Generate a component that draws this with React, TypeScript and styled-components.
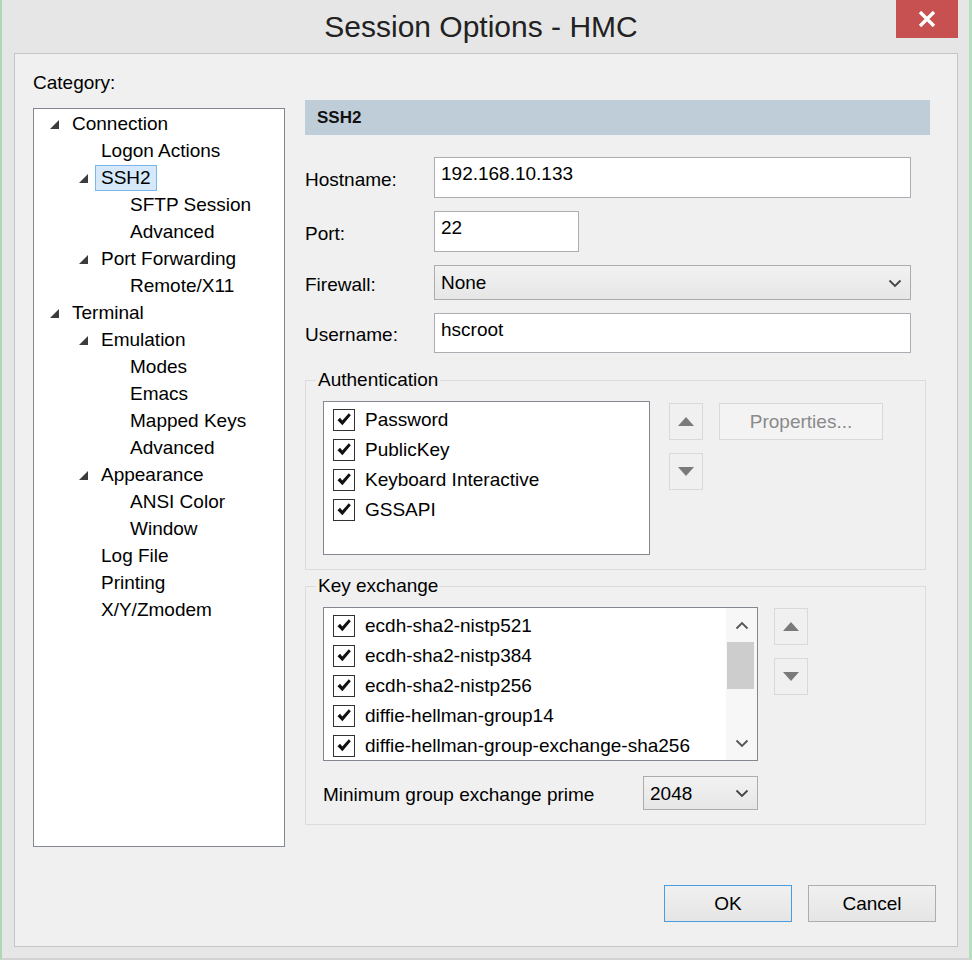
import React from "react";
import styled, { createGlobalStyle } from "styled-components";

const Global = createGlobalStyle`
  html, body { margin: 0; padding: 0; background: #ffffff; }
  body { font-family: "Liberation Sans", Arial, sans-serif; color: #000; }
  #root { width: 972px; height: 960px; }
  * { box-sizing: border-box; }
`;

const Window = styled.div`
  width: 972px;
  height: 960px;
  background: #e6e6e6;
  border-left: 2px solid #aad9b4;
  border-right: 3px solid #b6dfc0;
  border-bottom: 2px solid #d2d2d2;
  display: flex;
  flex-direction: column;
`;

const TitleBar = styled.div`
  height: 53px;
  flex: none;
  display: grid;
  grid-template-columns: 1fr auto 1fr;
  align-items: start;
`;

const Title = styled.div`
  grid-column: 2;
  font-size: 30px;
  line-height: 53px;
  color: #222;
  margin-right: 9px;
  white-space: nowrap;
`;

const CloseButton = styled.div`
  grid-column: 3;
  justify-self: end;
  margin-right: 11px;
  width: 62px;
  height: 38px;
  background: #c75150;
  display: flex;
  align-items: center;
  justify-content: center;
`;

const Client = styled.div`
  flex: 1;
  margin: 0 11px 11px 12px;
  background: #f0f0f0;
  border: 1px solid #c4c4c4;
  display: flex;
  flex-direction: column;
`;

const Main = styled.div`
  flex: 1;
  display: flex;
  align-items: flex-start;
  gap: 20px;
  padding: 18px 0 0 18px;
`;

const LeftCol = styled.div`
  width: 252px;
  display: flex;
  flex-direction: column;
`;

const Text = styled.span`
  font-size: 19px;
  line-height: 22px;
  white-space: nowrap;
`;

const CategoryLabel = styled(Text)`
  display: block;
  height: 22px;
`;

const Tree = styled.div`
  margin-top: 14px;
  height: 739px;
  background: #fff;
  border: 1px solid #828790;
  padding-top: 1px;
`;

const TreeRow = styled.div<{ $level: number }>`
  height: 27px;
  display: flex;
  align-items: center;
  padding-left: ${(p) => 16 + p.$level * 29}px;
`;

const Expander = styled.span`
  width: 22px;
  flex: none;
  display: flex;
  align-items: center;
  padding-top: 1px;
`;

const TreeLabel = styled(Text)<{ $selected?: boolean }>`
  padding: 1px 5px;
  margin-left: -6px;
  border: 1px solid ${(p) => (p.$selected ? "#7db6e8" : "transparent")};
  background: ${(p) => (p.$selected ? "#d5e9fa" : "transparent")};
`;

const RightCol = styled.div`
  width: 625px;
  margin-top: 28px;
  display: flex;
  flex-direction: column;
`;

const Header = styled.div`
  height: 35px;
  background: #bfcdd9;
  display: flex;
  align-items: center;
  padding-left: 12px;
  font-size: 17px;
  font-weight: bold;
  color: #111;
`;

const Form = styled.div`
  margin-top: 22px;
  display: grid;
  grid-template-columns: 129px 1fr;
  row-gap: 13px;
  align-items: center;
`;

const FieldLabel = styled(Text)`
  padding-top: 4px;
`;

const TextField = styled.div<{ $w: number; $h: number }>`
  width: ${(p) => p.$w}px;
  height: ${(p) => p.$h}px;
  background: #fff;
  border: 1px solid #abadb3;
  padding: 5px 6px 0;
  font-size: 19px;
  line-height: 22px;
`;

const Select = styled.div<{ $w: number; $h: number }>`
  width: ${(p) => p.$w}px;
  height: ${(p) => p.$h}px;
  background: linear-gradient(#f2f2f2, #e6e6e6);
  border: 1px solid #acacac;
  display: flex;
  align-items: center;
  justify-content: space-between;
  padding: 1px 8px 0 6px;
  font-size: 19px;
  line-height: 22px;
`;

const Group = styled.fieldset<{ $top: number }>`
  margin: ${(p) => p.$top}px 4px 0 0;
  padding: 0;
  border: 1px solid #dcdcdc;
  min-width: 0;
`;

const Legend = styled.legend`
  margin-left: 10px;
  padding: 0 2px;
  font-size: 19px;
  line-height: 22px;
`;

const GroupBody = styled.div`
  padding: 10px 0 14px 17px;
`;

const Row = styled.div<{ $gap: number }>`
  display: flex;
  align-items: flex-start;
  gap: ${(p) => p.$gap}px;
`;

const ListBox = styled.div<{ $w: number }>`
  width: ${(p) => p.$w}px;
  height: 154px;
  background: #fff;
  border: 1px solid #828790;
  display: flex;
`;

const ListItems = styled.div`
  flex: 1;
  padding: 3px 0 0 9px;
  overflow: hidden;
`;

const ListItem = styled.div`
  height: 30px;
  display: flex;
  align-items: center;
  gap: 10px;
`;

const CheckBox = styled.span`
  width: 22px;
  height: 22px;
  flex: none;
  border: 1px solid #333;
  background: #fff;
  display: flex;
  align-items: center;
  justify-content: center;
`;

const ScrollBar = styled.div`
  width: 31px;
  flex: none;
  background: #f7f7f7;
  display: flex;
  flex-direction: column;
`;

const ScrollArrow = styled.div`
  height: 34px;
  display: flex;
  align-items: center;
  justify-content: center;
`;

const ScrollTrack = styled.div`
  flex: 1;
  padding: 0 3px 0 1px;
`;

const ScrollThumb = styled.div`
  height: 47px;
  background: #cdcdcd;
`;

const ButtonStack = styled.div<{ $top: number }>`
  margin-top: ${(p) => p.$top}px;
  display: flex;
  flex-direction: column;
  gap: 13px;
`;

const ArrowButton = styled.div`
  width: 34px;
  height: 37px;
  background: #f0f0f0;
  border: 1px solid #d9d9d9;
  display: flex;
  align-items: center;
  justify-content: center;
`;

const DisabledButton = styled.div`
  margin: 2px 0 0 -3px;
  width: 164px;
  height: 37px;
  background: #f3f3f3;
  border: 1px solid #d9d9d9;
  color: #8a8a8a;
  display: flex;
  align-items: center;
  justify-content: center;
  font-size: 19px;
`;

const PrimeRow = styled.div`
  width: 435px;
  margin-top: 15px;
  display: flex;
  align-items: center;
  justify-content: space-between;
`;

const PrimeLabel = styled(Text)`
  padding-top: 3px;
`;

const Footer = styled.div`
  display: flex;
  justify-content: flex-end;
  gap: 16px;
  padding: 0 21px 24px 0;
`;

const DialogButton = styled.div<{ $default?: boolean }>`
  width: 128px;
  height: 37px;
  background: linear-gradient(#f0f0f0, #e5e5e5);
  border: 1px solid ${(p) => (p.$default ? "#4b9be3" : "#adadad")};
  display: flex;
  align-items: center;
  justify-content: center;
  padding-top: 1px;
  font-size: 19px;
`;

const Triangle = () => (
  <svg width="9" height="9" viewBox="0 0 9 9">
    <polygon points="9,0 9,9 0,9" fill="#3c3c3c" />
  </svg>
);

const Check = () => (
  <svg width="16" height="16" viewBox="0 0 16 16">
    <path d="M1.5 8.2 L4 5.8 L6.3 8.6 L12.8 1.2 L14.8 3.2 L6.4 13.2 Z" fill="#111" />
  </svg>
);

const Chevron = ({ up, color = "#444" }: { up?: boolean; color?: string }) => (
  <svg width="14" height="9" viewBox="0 0 14 9">
    <polyline
      points={up ? "1.5,7.5 7,2 12.5,7.5" : "1.5,1.5 7,7 12.5,1.5"}
      fill="none"
      stroke={color}
      strokeWidth="1.8"
    />
  </svg>
);

const SolidArrow = ({ up }: { up?: boolean }) => (
  <svg width="16" height="9" viewBox="0 0 16 9">
    <polygon points={up ? "0,9 8,0 16,9" : "0,0 16,0 8,9"} fill="#7a7a7a" />
  </svg>
);

const CloseGlyph = () => (
  <svg width="18" height="16" viewBox="0 0 18 16">
    <path d="M2 1 L16 15 M16 1 L2 15" stroke="#fff" strokeWidth="3.4" />
  </svg>
);

type Node = { label: string; level: number; expandable?: boolean; selected?: boolean };

const tree: Node[] = [
  { label: "Connection", level: 0, expandable: true },
  { label: "Logon Actions", level: 1 },
  { label: "SSH2", level: 1, expandable: true, selected: true },
  { label: "SFTP Session", level: 2 },
  { label: "Advanced", level: 2 },
  { label: "Port Forwarding", level: 1, expandable: true },
  { label: "Remote/X11", level: 2 },
  { label: "Terminal", level: 0, expandable: true },
  { label: "Emulation", level: 1, expandable: true },
  { label: "Modes", level: 2 },
  { label: "Emacs", level: 2 },
  { label: "Mapped Keys", level: 2 },
  { label: "Advanced", level: 2 },
  { label: "Appearance", level: 1, expandable: true },
  { label: "ANSI Color", level: 2 },
  { label: "Window", level: 2 },
  { label: "Log File", level: 1 },
  { label: "Printing", level: 1 },
  { label: "X/Y/Zmodem", level: 1 },
];

const auth = ["Password", "PublicKey", "Keyboard Interactive", "GSSAPI"];
const kex = [
  "ecdh-sha2-nistp521",
  "ecdh-sha2-nistp384",
  "ecdh-sha2-nistp256",
  "diffie-hellman-group14",
  "diffie-hellman-group-exchange-sha256",
];

const CheckList = ({ items }: { items: string[] }) => (
  <ListItems>
    {items.map((t) => (
      <ListItem key={t}>
        <CheckBox>
          <Check />
        </CheckBox>
        <Text>{t}</Text>
      </ListItem>
    ))}
  </ListItems>
);

export default function App() {
  return (
    <>
      <Global />
      <Window>
        <TitleBar>
          <Title>Session Options - HMC</Title>
          <CloseButton>
            <CloseGlyph />
          </CloseButton>
        </TitleBar>
        <Client>
          <Main>
            <LeftCol>
              <CategoryLabel>Category:</CategoryLabel>
              <Tree>
                {tree.map((n, i) => (
                  <TreeRow key={i} $level={n.level}>
                    <Expander>{n.expandable && <Triangle />}</Expander>
                    <TreeLabel $selected={n.selected}>{n.label}</TreeLabel>
                  </TreeRow>
                ))}
              </Tree>
            </LeftCol>
            <RightCol>
              <Header>SSH2</Header>
              <Form>
                <FieldLabel>Hostname:</FieldLabel>
                <TextField $w={477} $h={41}>192.168.10.133</TextField>
                <FieldLabel>Port:</FieldLabel>
                <TextField $w={145} $h={41}>22</TextField>
                <FieldLabel>Firewall:</FieldLabel>
                <Select $w={477} $h={35}>
                  <span>None</span>
                  <Chevron />
                </Select>
                <FieldLabel>Username:</FieldLabel>
                <TextField $w={477} $h={40}>hscroot</TextField>
              </Form>
              <Group $top={16}>
                <Legend>Authentication</Legend>
                <GroupBody>
                  <Row $gap={19}>
                    <ListBox $w={327}>
                      <CheckList items={auth} />
                    </ListBox>
                    <ButtonStack $top={2}>
                      <ArrowButton>
                        <SolidArrow up />
                      </ArrowButton>
                      <ArrowButton>
                        <SolidArrow />
                      </ArrowButton>
                    </ButtonStack>
                    <DisabledButton>Properties...</DisabledButton>
                  </Row>
                </GroupBody>
              </Group>
              <Group $top={5}>
                <Legend>Key exchange</Legend>
                <GroupBody>
                  <Row $gap={16}>
                    <ListBox $w={435}>
                      <CheckList items={kex} />
                      <ScrollBar>
                        <ScrollArrow>
                          <Chevron up color="#555" />
                        </ScrollArrow>
                        <ScrollTrack>
                          <ScrollThumb />
                        </ScrollTrack>
                        <ScrollArrow>
                          <Chevron color="#555" />
                        </ScrollArrow>
                      </ScrollBar>
                    </ListBox>
                    <ButtonStack $top={1}>
                      <ArrowButton>
                        <SolidArrow up />
                      </ArrowButton>
                      <ArrowButton>
                        <SolidArrow />
                      </ArrowButton>
                    </ButtonStack>
                  </Row>
                  <PrimeRow>
                    <PrimeLabel>Minimum group exchange prime</PrimeLabel>
                    <Select $w={115} $h={34}>
                      <span>2048</span>
                      <Chevron />
                    </Select>
                  </PrimeRow>
                </GroupBody>
              </Group>
            </RightCol>
          </Main>
          <Footer>
            <DialogButton $default>OK</DialogButton>
            <DialogButton>Cancel</DialogButton>
          </Footer>
        </Client>
      </Window>
    </>
  );
}
